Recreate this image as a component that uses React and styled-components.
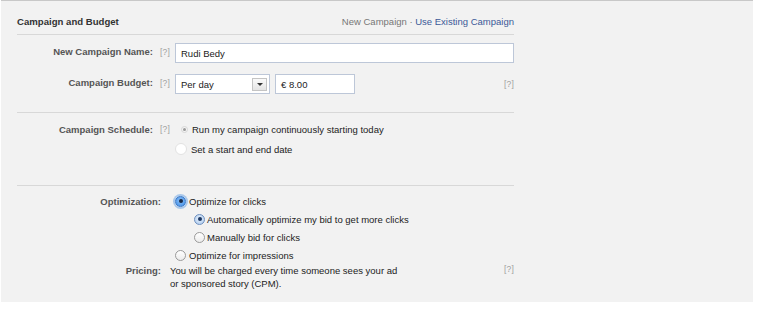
import React from "react";
import styled, { createGlobalStyle, css } from "styled-components";

const Global = createGlobalStyle`
  html, body { margin: 0; padding: 0; background: #fff; }
  body { font-family: "Liberation Sans", Arial, Helvetica, sans-serif; font-size: 9.5px; color: #333; }
`;

const Panel = styled.div`
  margin-left: 1px;
  width: 752px;
  height: 302px;
  box-sizing: border-box;
  background: #f2f2f2;
  border-top: 1px solid #c8c8c8;
  padding: 0 0 0 16px;
`;

const Content = styled.div`
  width: 497px;
`;

const Header = styled.div`
  display: flex;
  justify-content: space-between;
  align-items: flex-end;
  height: 34px;
  border-bottom: 1px solid #d8d8d8;
  padding-bottom: 7px;
  box-sizing: border-box;
`;

const Title = styled.div`
  font-weight: bold;
  font-size: 9.6px;
  color: #333;
`;

const HeaderLinks = styled.div`
  font-size: 9.5px;
  color: #777;
`;

const Link = styled.span`
  color: #3b5998;
`;

const Section = styled.div`
  padding: ${(p) => p.$pad};
  border-bottom: ${(p) => (p.$last ? "none" : "1px solid #d8d8d8")};
  display: flex;
  flex-direction: column;
  gap: ${(p) => p.$gap || "0px"};
`;

const Row = styled.div`
  display: grid;
  grid-template-columns: 158px 1fr;
  align-items: ${(p) => (p.$top ? "start" : "center")};
`;

const LabelCell = styled.div`
  display: flex;
  justify-content: flex-end;
  align-items: center;
  padding-right: ${(p) => (p.$help ? "5px" : "14px")};
  padding-bottom: ${(p) => p.$lift || "0px"};
  height: ${(p) => p.$h || "auto"};
  gap: 7px;
`;

const Label = styled.span`
  font-weight: bold;
  color: #555;
  font-size: 9.5px;
`;

const Help = styled.span`
  font-size: 8.5px;
  color: #a0a0a0;
  letter-spacing: 0.2px;
`;

const Control = styled.div`
  display: flex;
  align-items: center;
  gap: 5px;
  margin-left: ${(p) => p.$shift || "0px"};
`;

const TextInput = styled.div`
  box-sizing: border-box;
  height: 20px;
  width: ${(p) => p.$w};
  background: #fff;
  border: 1px solid #bdc7d8;
  display: flex;
  align-items: center;
  padding-left: 5px;
  font-size: 9.5px;
  color: #222;
`;

const Select = styled.div`
  box-sizing: border-box;
  height: 20px;
  width: 95px;
  background: #fff;
  border: 1px solid #bdc7d8;
  display: flex;
  align-items: center;
  justify-content: space-between;
  padding-left: 5px;
  padding-right: 2px;
  font-size: 9.5px;
  color: #222;
`;

const SelectButton = styled.span`
  width: 15px;
  height: 13px;
  box-sizing: border-box;
  border: 1px solid #c4c4c4;
  background: linear-gradient(#fafafa, #e4e4e4);
  display: flex;
  align-items: center;
  justify-content: center;
  &::after {
    content: "";
    border-left: 3px solid transparent;
    border-right: 3px solid transparent;
    border-top: 3px solid #333;
  }
`;

const BudgetHelpRow = styled.div`
  display: flex;
  align-items: center;
  justify-content: space-between;
  flex: 1;
`;

const Options = styled.div`
  display: flex;
  flex-direction: column;
`;

const Option = styled.div`
  display: flex;
  align-items: center;
  height: ${(p) => p.$h || "18px"};
  padding-left: ${(p) => p.$indent || "0px"};
  gap: ${(p) => p.$gap || "3px"};
  font-size: 9.5px;
  color: #222;
`;

const radioBase = css`
  box-sizing: border-box;
  border-radius: 50%;
  flex: none;
  display: flex;
  align-items: center;
  justify-content: center;
`;

const Radio = styled.span`
  ${radioBase}
  width: ${(p) => p.$size || 12}px;
  height: ${(p) => p.$size || 12}px;
  ${(p) =>
    p.$variant === "focus" &&
    css`
      background: radial-gradient(circle at 50% 40%, #8fc0f5, #3d8ee8);
      border: 1px solid #3a78c8;
      box-shadow: 0 0 0 2px rgba(110, 165, 230, 0.55);
      &::after { content: ""; width: 4px; height: 4px; border-radius: 50%; background: #1a2a45; }
    `}
  ${(p) =>
    p.$variant === "checked" &&
    css`
      background: radial-gradient(circle at 50% 40%, #e6f0fb, #a9c8ee);
      border: 1px solid #6d8fbf;
      &::after { content: ""; width: 4px; height: 4px; border-radius: 50%; background: #1d3761; }
    `}
  ${(p) =>
    p.$variant === "off" &&
    css`
      background: linear-gradient(#ffffff, #ececec);
      border: 1px solid #9a9a9a;
    `}
  ${(p) =>
    p.$variant === "faint" &&
    css`
      background: #f4f4f4;
      border: 1px solid #d6d6d6;
      &::after { content: ""; width: 3px; height: 3px; border-radius: 50%; background: #9a9a9a; }
    `}
  ${(p) =>
    p.$variant === "blank" &&
    css`
      background: #fff;
      border: 1px solid #e2e2e2;
    `}
`;

const PricingRow = styled.div`
  display: flex;
  justify-content: space-between;
  align-items: flex-start;
  flex: 1;
`;

const PricingText = styled.div`
  line-height: 13px;
  font-size: 9.5px;
  color: #222;
`;

export default function App() {
  return (
    <>
      <Global />
      <Panel>
        <Content>
          <Header>
            <Title>Campaign and Budget</Title>
            <HeaderLinks>
              New Campaign · <Link>Use Existing Campaign</Link>
            </HeaderLinks>
          </Header>

          <Section $pad="8px 0 18px 0" $gap="11px">
            <Row>
              <LabelCell $help $lift="3px">
                <Label>New Campaign Name:</Label>
                <Help>[?]</Help>
              </LabelCell>
              <Control>
                <TextInput $w="339px">Rudi Bedy</TextInput>
              </Control>
            </Row>
            <Row>
              <LabelCell $help $lift="3px">
                <Label>Campaign Budget:</Label>
                <Help>[?]</Help>
              </LabelCell>
              <Control>
                <Select>
                  Per day
                  <SelectButton />
                </Select>
                <BudgetHelpRow>
                  <TextInput $w="80px">€ 8.00</TextInput>
                  <Help>[?]</Help>
                </BudgetHelpRow>
              </Control>
            </Row>
          </Section>

          <Section $pad="6px 0 26px 0">
            <Row $top>
              <LabelCell $help $h="20px">
                <Label>Campaign Schedule:</Label>
                <Help>[?]</Help>
              </LabelCell>
              <Options>
                <Option $h="20px" $indent="6px" $gap="4px">
                  <Radio $variant="faint" $size={7} />
                  Run my campaign continuously starting today
                </Option>
                <Option $h="20px" $indent="0px" $gap="4px">
                  <Radio $variant="blank" $size={12} />
                  Set a start and end date
                </Option>
              </Options>
            </Row>
          </Section>

          <Section $last $pad="6px 0 0 0">
            <Row $top>
              <LabelCell $h="18px">
                <Label>Optimization:</Label>
              </LabelCell>
              <Options>
                <Option $indent="0px">
                  <Radio $variant="focus" $size={11} />
                  Optimize for clicks
                </Option>
                <Option $indent="19px" $gap="2px">
                  <Radio $variant="checked" $size={11} />
                  Automatically optimize my bid to get more clicks
                </Option>
                <Option $indent="19px" $gap="2px">
                  <Radio $variant="off" $size={11} />
                  Manually bid for clicks
                </Option>
                <Option $indent="0px">
                  <Radio $variant="off" $size={11} />
                  Optimize for impressions
                </Option>
              </Options>
            </Row>
            <Row $top>
              <LabelCell $h="13px">
                <Label>Pricing:</Label>
              </LabelCell>
              <Control $shift="-5px">
                <PricingRow>
                  <PricingText>
                    You will be charged every time someone sees your ad
                    <br />
                    or sponsored story (CPM).
                  </PricingText>
                  <Help>[?]</Help>
                </PricingRow>
              </Control>
            </Row>
          </Section>
        </Content>
      </Panel>
    </>
  );
}
